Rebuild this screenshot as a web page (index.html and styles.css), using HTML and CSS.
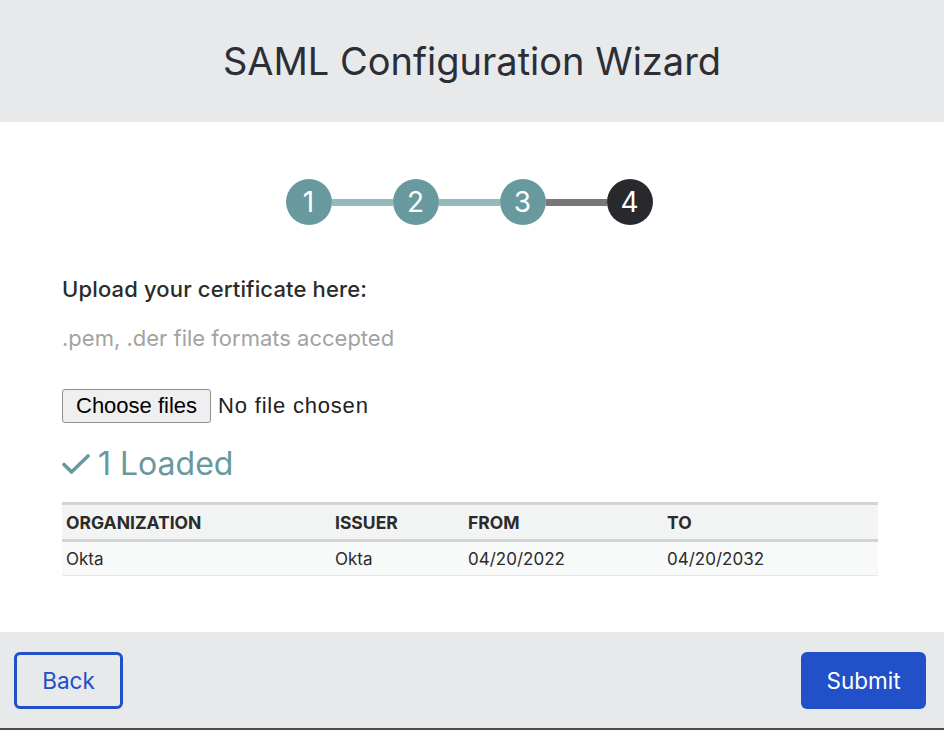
FILE: index.html
```html
<!DOCTYPE html>
<html>
<head>
<meta charset="utf-8">
<link rel="stylesheet" href="styles.css">
</head>
<body>
<div class="modal">
  <header class="head">
    <h1 class="title">SAML Configuration Wizard</h1>
  </header>
  <main class="body">
    <div class="stepper">
      <div class="step done">1</div>
      <div class="line done"></div>
      <div class="step done">2</div>
      <div class="line done"></div>
      <div class="step done">3</div>
      <div class="line todo"></div>
      <div class="step current">4</div>
    </div>
    <p class="label">Upload your certificate here:</p>
    <p class="hint">.pem, .der file formats accepted</p>
    <div class="file">
      <button class="choose" type="button">Choose files</button>
      <span class="nofile">No file chosen</span>
    </div>
    <div class="loaded">
      <svg class="check" width="28" height="22" viewBox="0 0 28 22"><path d="M2 11.5 L9.5 19 L26 3" fill="none" stroke="#68999f" stroke-width="3.6" stroke-linecap="round" stroke-linejoin="round"/></svg>
      <span>1 Loaded</span>
    </div>
    <table class="certs">
      <colgroup><col class="c1"><col class="c2"><col class="c3"><col class="c4"></colgroup>
      <thead>
        <tr><th>ORGANIZATION</th><th>ISSUER</th><th>FROM</th><th>TO</th></tr>
      </thead>
      <tbody>
        <tr><td>Okta</td><td>Okta</td><td>04/20/2022</td><td>04/20/2032</td></tr>
      </tbody>
    </table>
  </main>
  <footer class="foot">
    <button class="btn back" type="button">Back</button>
    <button class="btn submit" type="button">Submit</button>
  </footer>
  <div class="edge"></div>
</div>
</body>
</html>
```
FILE: styles.css
```css
html, body { margin: 0; padding: 0; }
body { font-family: Inter, "Noto Sans", sans-serif; background: #fff; color: #2b2d31; }
.modal { width: 944px; height: 730px; display: flex; flex-direction: column; }
.head { height: 122px; background: #e8e9eb; display: flex; align-items: center; justify-content: center; }
.title { margin: 0; font-size: 38px; font-weight: 400; color: #2b2f35; }
.body { flex: 1; padding: 57px 66px 0 62px; }
.stepper { display: flex; align-items: center; justify-content: center; margin-left: -2px; }
.step { width: 46px; height: 46px; border-radius: 50%; display: flex; align-items: center; justify-content: center; color: #fff; font-size: 28px; font-weight: 400; }
.step.done { background: #68999f; }
.step.current { background: #28292d; }
.line { width: 61px; height: 7px; }
.line.done { background: #93babd; }
.line.todo { background: #777; }
.label { margin: 51px 0 0; font-size: 22px; font-weight: 500; color: #2b2b2b; line-height: 26px; letter-spacing: 0.15px; }
.hint { margin: 23px 0 0; font-size: 22px; color: #a3a3a3; line-height: 26px; }
.file { margin-top: 38px; display: flex; align-items: center; }
.choose { font-family: "Liberation Sans", Arial, sans-serif; font-size: 22px; height: 34px; padding: 0 13px; background: #efefef; border: 1px solid #8f8f8f; border-radius: 3px; color: #000; }
.nofile { font-family: "Liberation Sans", Arial, sans-serif; font-size: 22px; letter-spacing: 0.8px; margin-left: 7px; color: #222; }
.loaded { margin-top: 21px; display: flex; align-items: center; color: #68999f; font-size: 32px; height: 38px; }
.check { margin-right: 8px; margin-top: 2px; }
.certs { margin-top: 20px; width: 816px; border-collapse: collapse; table-layout: fixed; }
.c1 { width: 269px; } .c2 { width: 133px; } .c3 { width: 199px; } .c4 { width: 215px; }
.certs th { text-align: left; font-size: 17.5px; font-weight: 700; color: #2b2b2b; background: #f2f3f3; border-top: 3px solid #d2d3d5; border-bottom: 3px solid #d2d3d5; padding: 0 4px; height: 34px; }
.certs td { font-size: 17px; color: #2b2b2b; background: #f8f9f9; border-bottom: 1px solid #e6e7e8; padding: 0 4px; height: 33px; }
.foot { height: 96px; background: #e8e9eb; display: flex; justify-content: space-between; align-items: center; padding: 0 18px 0 14px; }
.btn { font-family: Inter, "Noto Sans", sans-serif; font-size: 22.5px; height: 57px; border-radius: 6px; cursor: pointer; }
.back { width: 109px; background: transparent; border: 3px solid #2150c8; color: #2150c8; }
.submit { width: 125px; background: #2150c8; border: none; color: #fff; }
.edge { height: 2px; background: #4a4a4f; }
```
